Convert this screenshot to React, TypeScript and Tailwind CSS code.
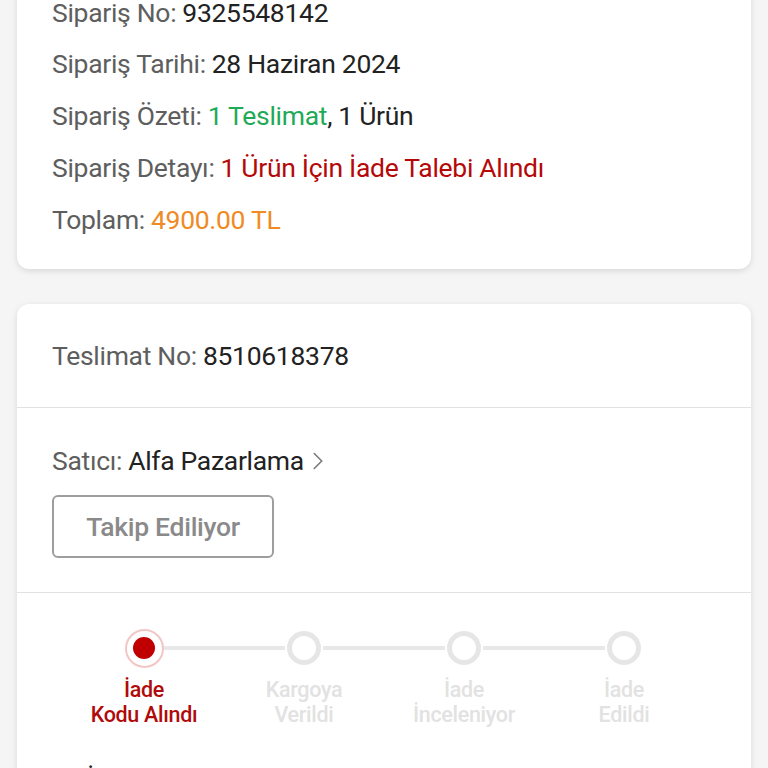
import { ChevronRight } from "lucide-react";

const steps = [
  { lines: ["İade", "Kodu Alındı"], active: true },
  { lines: ["Kargoya", "Verildi"], active: false },
  { lines: ["İade", "İnceleniyor"], active: false },
  { lines: ["İade", "Edildi"], active: false },
];

function Row({ label, first, children }: { label: string; first?: boolean; children: React.ReactNode }) {
  return (
    <div className={`${first ? "h-[50px]" : "h-[52px]"} flex items-center`}>
      <span className="text-[#5e5e5e]">{label}</span>
      <span className="ml-[6px] text-[#222222]">{children}</span>
    </div>
  );
}

export default function App() {
  return (
    <div
      className="min-h-screen h-[768px] overflow-hidden bg-[#f5f5f5] px-[17px] text-[26.5px] leading-[32px] tracking-[-0.3px]"
      style={{ fontFamily: "Roboto, 'Noto Sans', sans-serif" }}
    >
      {/* Siparis ozeti */}
      <div className="-mt-[40px] bg-white rounded-[12px] shadow-[0_2px_6px_rgba(0,0,0,0.12)] pt-[28px] pb-[23px] px-[35px]">
        <Row label="Sipariş No:" first>
          9325548142
        </Row>
        <Row label="Sipariş Tarihi:">28 Haziran 2024</Row>
        <Row label="Sipariş Özeti:">
          <span className="text-[#1faa58]">1 Teslimat</span>, 1 Ürün
        </Row>
        <Row label="Sipariş Detayı:">
          <span className="text-[#b50808]">1 Ürün İçin İade Talebi Alındı</span>
        </Row>
        <Row label="Toplam:">
          <span className="text-[#f08a24]">4900.00 TL</span>
        </Row>
      </div>

      {/* Teslimat */}
      <div className="mt-[35px] bg-white rounded-t-[12px] shadow-[0_2px_6px_rgba(0,0,0,0.12)]">
        <div className="h-[104px] flex items-center px-[35px] border-b border-[#e2e2e2]">
          <span className="text-[#5e5e5e]">Teslimat No:</span>
          <span className="ml-[6px] text-[#222222]">8510618378</span>
        </div>

        <div className="pt-[37px] pb-[34px] px-[35px] border-b border-[#e2e2e2]">
          <div className="flex items-center">
            <span className="text-[#5e5e5e]">Satıcı:</span>
            <span className="ml-[6px] text-[#222222]">Alfa Pazarlama</span>
            <ChevronRight size={30} strokeWidth={1.3} className="ml-[-1px] text-[#7a7a7a]" />
          </div>
          <button className="mt-[18px] w-[222px] h-[63px] border-2 border-[#9e9e9e] rounded-[6px] text-[#8a8a8a] font-medium">
            Takip Ediliyor
          </button>
        </div>

        <div className="pt-[35px] px-[47px]">
          <div className="grid grid-cols-4">
            {steps.map((s, i) => (
              <div key={i} className="flex flex-col items-center">
                <div className="flex items-center w-full h-[40px]">
                  <div className={`flex-1 h-[4px] ${i === 0 ? "bg-transparent" : "bg-[#e8e8e8]"}`} />
                  {s.active ? (
                    <div className="w-[39px] h-[39px] rounded-full border-2 border-[#f3c6c6] flex items-center justify-center">
                      <div className="w-[22px] h-[22px] rounded-full bg-[#c00000]" />
                    </div>
                  ) : (
                    <div className="w-[34px] h-[34px] mx-[2px] rounded-full border-[5px] border-[#e6e6e6]" />
                  )}
                  <div className={`flex-1 h-[4px] ${i === steps.length - 1 ? "bg-transparent" : "bg-[#e8e8e8]"}`} />
                </div>
                <div
                  className={`mt-[9px] text-center text-[21.5px] leading-[25px] font-medium ${
                    s.active ? "text-[#b00a0a]" : "text-[#e2e2e2]"
                  }`}
                >
                  {s.lines.map((l) => (
                    <div key={l}>{l}</div>
                  ))}
                </div>
              </div>
            ))}
          </div>
          <div className="mt-[36px] pl-[23px] text-[#222222]">İade Bilgileri</div>
        </div>
      </div>
    </div>
  );
}
